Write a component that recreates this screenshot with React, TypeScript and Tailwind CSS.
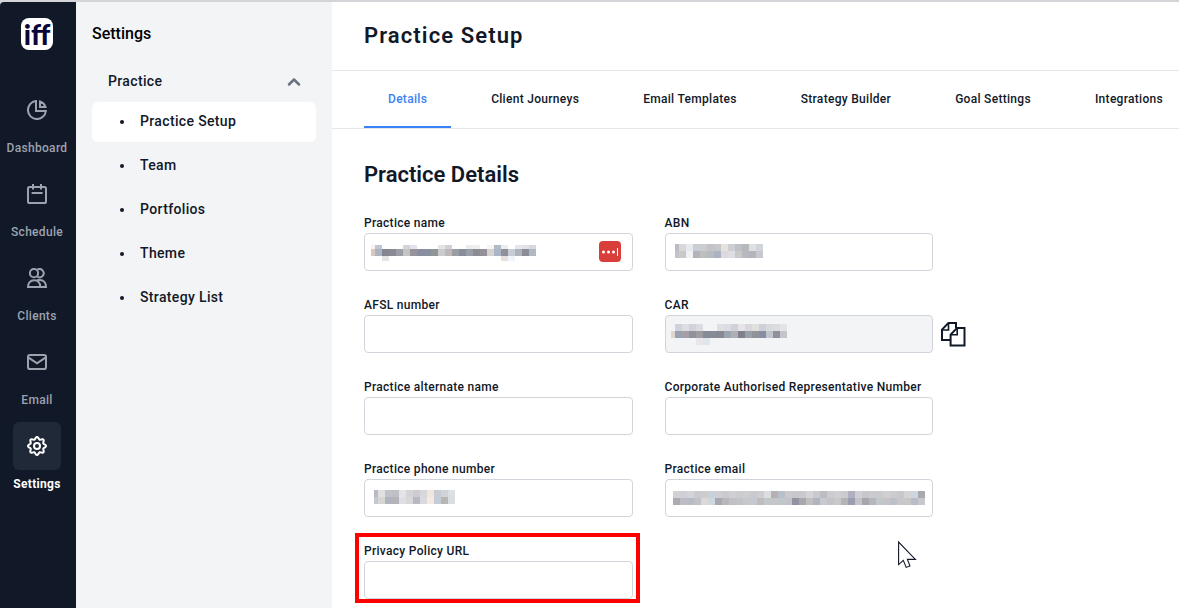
import { useState } from 'react'
import type { ReactNode } from 'react'
import { ChevronUp } from 'lucide-react'

interface MosaicProps {
  cell?: number
  first: number
  rows: { height: number; colors: string }[]
  className: string
}

// Pixelated cover for private values. Each row is a list of hex colours, "-" leaves a cell empty.
function Mosaic({ cell = 7, first, rows, className }: MosaicProps) {
  const parsed = rows.map((row, i) => ({
    height: row.height,
    y: rows.slice(0, i).reduce((sum, r) => sum + r.height, 0),
    colors: row.colors.split(' '),
  }))
  const width = first + (parsed[0].colors.length - 1) * cell
  const height = rows.reduce((sum, r) => sum + r.height, 0)

  return (
    <svg
      width={width}
      height={height}
      shapeRendering="crispEdges"
      className={`pointer-events-none absolute ${className}`}
      aria-hidden="true"
    >
      {parsed.map((row) =>
        row.colors.map((color, i) =>
          color === '-' ? null : (
            <rect
              key={`${row.y}-${i}`}
              x={i === 0 ? 0 : first + (i - 1) * cell}
              y={row.y}
              width={i === 0 ? first : cell}
              height={row.height}
              fill={`#${color}`}
            />
          )
        )
      )}
    </svg>
  )
}

// Outline with eight rounded teeth
const gearPath =
  Array.from({ length: 96 }, (_, i) => {
    const angle = (i / 96) * Math.PI * 2
    const radius = 7.9 + 1.1 * Math.cos(angle * 8)
    const x = (10 + radius * Math.cos(angle)).toFixed(2)
    const y = (10 + radius * Math.sin(angle)).toFixed(2)
    return `${i === 0 ? 'M' : 'L'}${x} ${y}`
  }).join('') + 'Z'

const railItems: { label: string; icon: ReactNode }[] = [
  {
    label: 'Dashboard',
    icon: (
      <>
        <path d="M9 1.1A9 9 0 1 0 18.9 11H9Z" />
        <path d="M13 1.5V7H18.5A8.5 8.5 0 0 0 13 1.5Z" />
      </>
    ),
  },
  {
    label: 'Schedule',
    icon: (
      <>
        <rect x="1" y="3" width="18" height="16" rx="1.6" />
        <path d="M6 0V5.4M14 0V5.4M4.6 9H15.6" />
      </>
    ),
  },
  {
    label: 'Clients',
    icon: (
      <>
        <circle cx="7" cy="5.2" r="4.1" />
        <path d="M10.4 1.7A4.1 4.1 0 1 1 10.4 8.7" />
        <path d="M1 19C1 14.9 3.4 12.2 7 12.2S13.3 14.9 13.3 19Z" />
        <path d="M9.8 12.3C10.8 11.9 11.8 11.9 13 11.9C16.6 11.9 19 14.9 19 19H13.3" />
      </>
    ),
  },
  {
    label: 'Email',
    icon: (
      <>
        <rect x="1" y="3" width="18" height="14" rx="1.8" />
        <path d="M1.6 5.6L10 11.4L18.4 5.6" />
      </>
    ),
  },
  {
    label: 'Settings',
    icon: (
      <>
        <path d={gearPath} />
        <circle cx="10" cy="10" r="3" />
      </>
    ),
  },
]

const practiceLinks = ['Practice Setup', 'Team', 'Portfolios', 'Theme', 'Strategy List']

const tabs = [
  'Details',
  'Client Journeys',
  'Email Templates',
  'Strategy Builder',
  'Goal Settings',
  'Integrations',
]

function Rail() {
  return (
    <nav className="flex w-19 shrink-0 flex-col items-center rounded-tl bg-[#111827] pt-4 pr-0.5">
      <div className="flex size-8 items-center justify-center rounded-lg bg-white font-[Lato,sans-serif] text-[28px] leading-8 font-black text-[#0b0638]">
        iff
      </div>
      <div className="mt-9 flex flex-col items-center">
        {railItems.map(({ label, icon }) => {
          const active = label === 'Settings'
          return (
            <a
              key={label}
              href="#"
              className={`flex h-21 flex-col items-center text-xs tracking-wide ${
                active ? 'font-bold text-white' : 'font-medium text-[#9ca3af]'
              }`}
            >
              <span
                className={`flex size-12 items-center justify-center rounded-md ${
                  active ? 'bg-[#1f2937]' : ''
                }`}
              >
                <svg
                  width="20"
                  height="20"
                  viewBox="0 0 20 20"
                  fill="none"
                  stroke="currentColor"
                  strokeWidth="2"
                  aria-hidden="true"
                >
                  {icon}
                </svg>
              </span>
              <span className="mt-1.5">{label}</span>
            </a>
          )
        })}
      </div>
    </nav>
  )
}

function SettingsMenu() {
  return (
    <aside className="w-64 shrink-0 bg-[#f3f4f6] px-4 pt-5 font-medium">
      <h2 className="text-base leading-6 text-black">Settings</h2>
      <button
        type="button"
        className="mt-4 flex h-10 w-full items-center justify-between pr-3 pl-4 text-sm tracking-wide"
      >
        <span className="pb-0.5">Practice</span>
        <ChevronUp className="size-5 text-[#6b7280]" strokeWidth={3} />
      </button>
      <ul className="flex flex-col gap-1">
        {practiceLinks.map((link, i) => (
          <li key={link}>
            <a
              href="#"
              className={`flex h-10 items-center gap-4 rounded-md pl-7 text-sm tracking-wide ${
                i === 0 ? 'bg-white' : ''
              }`}
            >
              <span className="size-1 rounded-full bg-[#111827]" />
              <span className="pb-0.5">{link}</span>
            </a>
          </li>
        ))}
      </ul>
    </aside>
  )
}

interface FieldProps {
  id: string
  label: string
  type?: string
  disabled?: boolean
  children?: ReactNode
}

function Field({ id, label, type = 'text', disabled, children }: FieldProps) {
  return (
    <div>
      <label htmlFor={id} className="block text-xs leading-5 font-medium tracking-wide">
        {label}
      </label>
      <div className="relative">
        <input
          id={id}
          type={type}
          disabled={disabled}
          className="block h-9.5 w-full rounded border border-[#d1d5db] bg-white px-3 text-sm disabled:bg-[#f3f4f6]"
        />
        {children}
      </div>
    </div>
  )
}

function PracticeForm() {
  return (
    <form className="grid w-full max-w-[569px] grid-cols-2 gap-x-8 gap-y-6">
      <Field id="practice-name" label="Practice name">
        <Mosaic
          first={4}
          className="top-3 left-[7px]"
          rows={[
            {
              height: 4,
              colors:
                'faf1ee bfc6d1 - - - d4d4d4 e2e3ec - - - e4e4e4 cdd2da - - ececec f0f0f2 - faf5f0 b4b9c8 ededee - e6e6ee e2e2e8 d6d6dc',
            },
            {
              height: 7,
              colors:
                'd8c8c0 aab4c2 858790 8a8a93 9a9ea8 c4c4c4 98949c 898ea0 8a8f9f 929598 c8cccf bfb8b8 989da6 888d9a 9a9ea6 8c8c94 929298 d5d2d2 aab6c8 909098 c8ccd6 b0b4ba 8c8c98 b0b8c2',
            },
            {
              height: 5,
              colors: '- - e4e4e4 - - - - - - - - - - - - - - - - e8e0e0 f0f4fc - - -',
            },
          ]}
        />
        <button
          type="button"
          aria-label="Fill from password manager"
          className="absolute top-2 right-3 flex h-[21px] w-[22px] items-center justify-center rounded bg-[#d93f3a]"
        >
          <svg width="18" height="12" viewBox="0 0 18 12" fill="#fff" aria-hidden="true">
            <circle cx="2.5" cy="6" r="1.5" />
            <circle cx="7.5" cy="6" r="1.5" />
            <circle cx="12.5" cy="6" r="1.5" />
            <rect x="16" y="2" width="1" height="8" />
          </svg>
        </button>
      </Field>

      <Field id="abn" label="ABN">
        <Mosaic
          first={4}
          className="top-[11px] left-2.5"
          rows={[
            {
              height: 7,
              colors:
                'b8bcc8 dcd6d4 e6e9ee c8ced6 cdcdcd c4c4c8 c4c8cc e6e2de cbcfd3 bcc0c8 b8b8bc dfe0e4 d0d5da',
            },
            {
              height: 7,
              colors:
                'c4c4c8 cac8c8 f0f1f2 b4b4b8 bcbec0 b8bcc0 acb2c0 dcdae0 dedee0 c8caca b8b8c0 b4b4bc c8c8d0',
            },
          ]}
        />
      </Field>

      <Field id="afsl" label="AFSL number" />

      <Field id="car" label="CAR" disabled>
        <Mosaic
          first={4}
          className="top-[9px] left-1.5"
          rows={[
            {
              height: 7,
              colors:
                '- ced2da dedee2 d2d2da dcdce0 - - dfe0e2 dcdce2 d0d2da e6e4e8 d8d8dc e0e0e0 ccd0d8 d8dadc dcdce0 e4e4e8',
            },
            {
              height: 7,
              colors:
                'e2d5cd 98a2b2 a49fa8 908f9a 9c9ca2 878a96 868a94 868990 9ca4b0 b0aeb0 807f8c 98a0a8 909498 868ea2 c0c4ce 90909c c4c4ca',
            },
            { height: 7, colors: '- - - - e8e6ea dfe5ec - - - - - - - - - - -' },
          ]}
        />
        <button type="button" aria-label="Copy CAR" className="absolute top-1.5 left-full ml-2">
          <svg
            width="25"
            height="26"
            viewBox="0 0 25 26"
            fill="none"
            stroke="#111827"
            strokeWidth="2"
            aria-hidden="true"
          >
            <path d="M9 19H1V8.6L7.4 2H15V7" />
            <path d="M1.2 9H7.5V2" strokeWidth="1.6" />
            <path d="M9.6 13.6L16 7H23.5V24.5H9.6Z" />
            <path d="M9.6 13.8H16.2V7" strokeWidth="1.6" />
          </svg>
        </button>
      </Field>

      <Field id="alternate-name" label="Practice alternate name" />
      <Field id="car-number" label="Corporate Authorised Representative Number" />

      <Field id="phone" label="Practice phone number" type="tel">
        <Mosaic
          first={4}
          className="top-[11px] left-2.5"
          rows={[
            {
              height: 7,
              colors:
                'b8bac4 e0e0e0 c0c2ca c0c0c4 e4e4ea d4d4d6 ccccd0 d8d8da efe6e0 c8ccd2 d0d4d8 dce0e4',
            },
            {
              height: 7,
              colors:
                'c4c8d0 d8d6d2 b0b4be b4b4b8 dedee6 d8d8da b8b8c4 dadade f4ece4 c4ccd8 b8b6b4 d8dee2',
            },
          ]}
        />
      </Field>

      <Field id="email" label="Practice email" type="email">
        <Mosaic
          first={7}
          className="top-3 left-2"
          rows={[
            {
              height: 7,
              colors:
                'd2d2d4 cfcfd5 d2d4d8 cacbd0 cfcccc c8d0d8 cecdd2 cbcbcf cfcfd2 cbcbd0 cecece cacace ccced2 dcdfe2 b6b0b2 b8c0cc cacace c8c8cc cacace d4d4d6 cacace bcbcc2 cccccf d0d0d4 cacad0 b0b0be d0d0d4 c8c8cc cacad2 cacacc d0d0d2 cccccf c8c8ca d4d4d6 ced4e0 aaaaae',
            },
            {
              height: 7,
              colors:
                'acacb2 bcbcc4 b8bac4 c0c2c8 ddd8d6 d0d6de a8a8b0 b8b8ba c0c0c6 c0c4c8 c8c8ca c4c8d0 c0bcba c0c8cc c4c6ca c0c8cc c4c4c8 9094a2 a8a8ae c0c0c4 b0b4c0 cacace c4c4c8 c8c8ca b4b4b6 9a9eb0 c4c4c6 a6a6ac b4b8be c0c8cc c4c4c8 bcc0c8 c8c8cc c8c8ca b8bcc6 c8c8cc',
            },
          ]}
        />
      </Field>

      <div className="relative">
        <Field id="privacy-url" label="Privacy Policy URL" type="url" />
        {/* Highlight frame */}
        <div className="pointer-events-none absolute -top-2 -right-[7px] -bottom-1 -left-[9px] border-4 border-[#ff0000]" />
      </div>
    </form>
  )
}

export default function App() {
  const [tab, setTab] = useState('Details')

  return (
    <div className="h-screen overflow-hidden bg-[#d4d4d9] pt-0.5 font-[Roboto,sans-serif] text-[#111827]">
      <div className="flex h-full">
        <Rail />
        <SettingsMenu />

        <main className="relative min-w-0 flex-1 overflow-hidden bg-white">
          <header className="flex h-[69px] items-center border-b border-[#e5e7eb] px-8">
            <h1 className="text-[22px] leading-8 font-semibold tracking-wider">Practice Setup</h1>
          </header>

          <div className="flex h-[58px] gap-4 border-b border-[#e5e7eb] px-8" role="tablist">
            {tabs.map((name) => (
              <button
                key={name}
                type="button"
                role="tab"
                aria-selected={name === tab}
                onClick={() => setTab(name)}
                className={`shrink-0 border-b-2 px-6 text-xs font-medium tracking-wide ${
                  name === tab ? 'border-[#3b82f6] text-[#3b82f6]' : 'border-transparent'
                }`}
              >
                {name}
              </button>
            ))}
          </div>

          <section className="px-8 pt-7.5">
            <h2 className="mb-5.5 text-[22px] leading-8 font-semibold">Practice Details</h2>
            <PracticeForm />
          </section>

          {/* Mouse pointer */}
          <svg
            width="20"
            height="28"
            viewBox="0 0 20 28"
            className="pointer-events-none absolute top-[539px] left-[565px]"
            fill="#fff"
            stroke="#111827"
            strokeWidth="1.1"
            aria-hidden="true"
          >
            <path d="M1.6 1V23.6L6.3 19.4L9.2 26.4L13 25L10.4 18.4H18.4Z" />
          </svg>
        </main>
      </div>
    </div>
  )
}
